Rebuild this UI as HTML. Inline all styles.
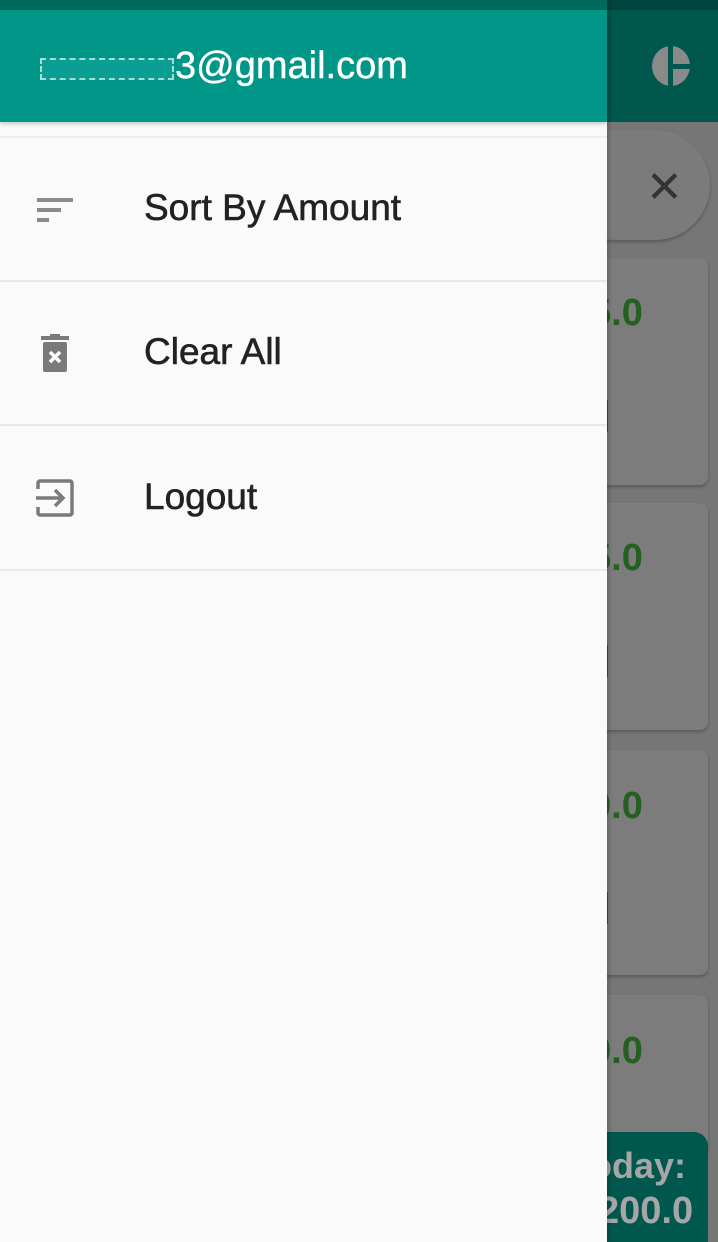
<!DOCTYPE html>
<html style="overflow:hidden;height:1242px"><head><style>
body{margin:0;width:718px;height:1242px;position:relative;overflow:hidden;font-family:"Liberation Sans",sans-serif;background:#767676}
.abs{position:absolute}
.card{position:absolute;left:560px;width:148px;background:#7c7c7c;border-radius:8px;box-shadow:0 2px 3px rgba(0,0,0,.25)}
.g{position:absolute;left:590px;color:#24601f;font-weight:bold;font-size:38px}
.r{position:absolute;left:598px;width:10px;height:32px;background:#8a2a2a}
.item{position:absolute;left:0;width:607px;height:142px;border-bottom:2px solid #e8e8e8}
.item span{position:absolute;left:144px;top:49px;font-size:37px;color:#222;-webkit-text-stroke:0.6px #222}
</style></head><body>
<div class="abs" style="left:0;top:0;width:718px;height:122px;background:#00574d"></div>
<div class="abs" style="left:0;top:0;width:718px;height:10px;background:#00463e"></div>
<div class="abs" style="left:652px;top:46px;width:38px;height:40px;border-radius:50%;background:#8a8a8a"></div>
<div class="abs" style="left:668px;top:46px;width:5px;height:40px;background:#00574d"></div>
<div class="abs" style="left:672px;top:64px;width:20px;height:5px;background:#00574d"></div>
<div class="abs" style="left:560px;top:130px;width:150px;height:110px;border-radius:55px;background:#7b7b7b;box-shadow:0 2px 3px rgba(0,0,0,.25)"></div>
<div class="abs" style="left:646px;top:162px;font-size:44px;color:#333">✕</div>
<div class="card" style="top:258px;height:227px"></div>
<div class="card" style="top:503px;height:227px"></div>
<div class="card" style="top:750px;height:225px"></div>
<div class="card" style="top:995px;height:160px"></div>
<div class="g" style="top:292px">5.0</div><div class="r" style="top:400px"></div>
<div class="g" style="top:537px">5.0</div><div class="r" style="top:645px"></div>
<div class="g" style="top:785px">0.0</div><div class="r" style="top:892px"></div>
<div class="g" style="top:1030px">0.0</div>
<div class="abs" style="left:560px;top:1132px;width:148px;height:110px;background:#00574d;border-radius:14px 14px 0 0"></div>
<div class="abs" style="left:590px;top:1145px;font-size:36px;font-weight:bold;color:#a6a6a6">oday:</div>
<div class="abs" style="left:598px;top:1190px;font-size:38px;font-weight:bold;color:#a6a6a6">200.0</div>

<div class="abs" style="left:0;top:0;width:607px;height:1242px;background:#fafafa;box-shadow:2px 0 4px rgba(0,0,0,.2)"></div>
<div class="abs" style="left:0;top:0;width:607px;height:10px;background:#00695c"></div>
<div class="abs" style="left:0;top:10px;width:607px;height:112px;background:#009688;box-shadow:0 2px 4px rgba(0,0,0,.2)"></div>
<div class="abs" style="left:40px;top:58px;width:130px;height:18px;border:2px dashed #a8dcd6;background:#0a9f92"></div>
<div class="abs" style="left:175px;top:45px;font-size:38px;color:#fff;-webkit-text-stroke:0.4px #fff">3@gmail.com</div>
<div class="abs" style="left:0;top:136px;width:607px;height:2px;background:#eee"></div>
<div class="item" style="top:138px"><span>Sort By Amount</span>
<div class="abs" style="left:37px;top:60px;width:36px;height:4px;background:#8a8a8a"></div>
<div class="abs" style="left:37px;top:70px;width:24px;height:4px;background:#8a8a8a"></div>
<div class="abs" style="left:37px;top:80px;width:12px;height:4px;background:#8a8a8a"></div></div>
<div class="item" style="top:282px"><span>Clear All</span>
<svg class="abs" style="left:40px;top:52px" width="30" height="40" viewBox="0 0 30 40"><rect x="1" y="2" width="28" height="4" fill="#7a7a7a"/><rect x="10" y="0" width="10" height="3" fill="#7a7a7a"/><rect x="3" y="8" width="24" height="30" rx="2" fill="#7a7a7a"/><path d="M10 18L20 28M20 18L10 28" stroke="#fff" stroke-width="3.5"/></svg></div>
<div class="item" style="top:427px"><span>Logout</span>
<svg class="abs" style="left:36px;top:52px" width="38" height="38" viewBox="0 0 38 38"><path d="M2 10V4a2 2 0 0 1 2-2h30a2 2 0 0 1 2 2v30a2 2 0 0 1-2 2H4a2 2 0 0 1-2-2v-6" fill="none" stroke="#7a7a7a" stroke-width="3.5"/><path d="M0 19H26M19 11l8 8-8 8" fill="none" stroke="#7a7a7a" stroke-width="3.5"/></svg></div>
</body></html>
